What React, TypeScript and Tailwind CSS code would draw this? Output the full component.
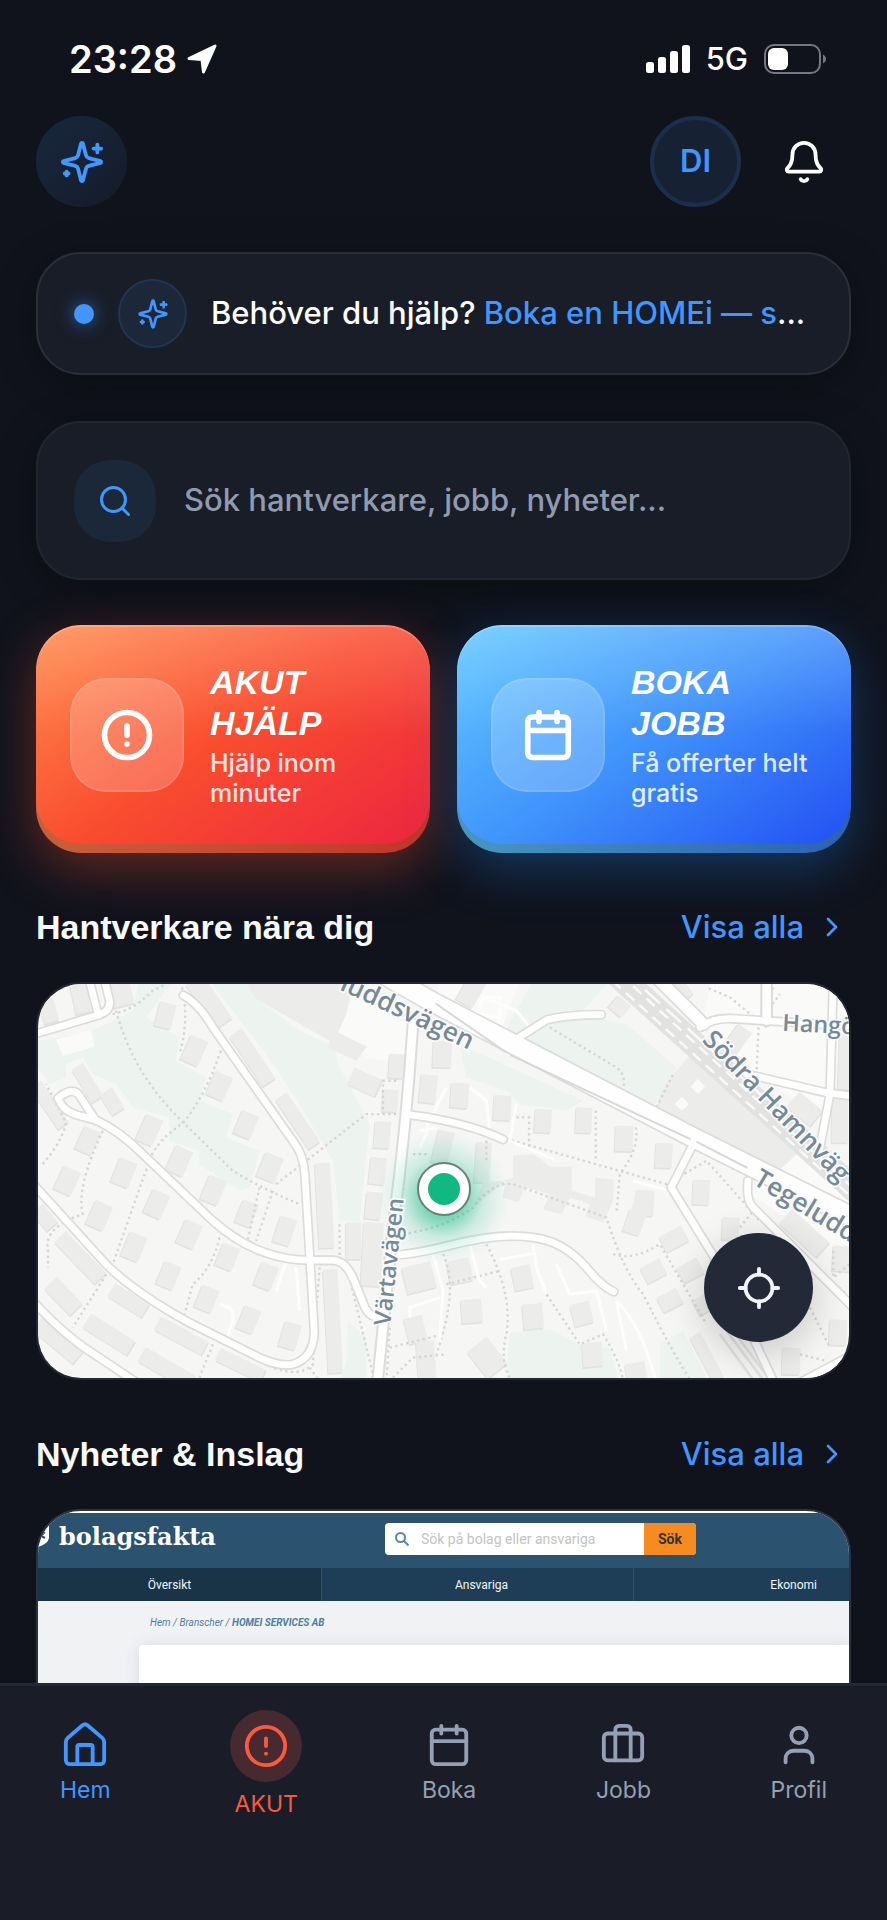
import type { ReactNode } from 'react';
import { Bell, Calendar, ChevronRight, CircleAlert, Search, User } from 'lucide-react';

function Sparkles({ size }: { size: number }) {
  return (
    <svg width={size} height={size} viewBox="0 0 24 24" fill="none" stroke="currentColor" strokeWidth="2" strokeLinecap="round" strokeLinejoin="round">
      <path d="M9.937 15.500A2 2 0 0 0 8.500 14.063l-6.135-1.582a.5.5 0 0 1 0-.962L8.500 9.936A2 2 0 0 0 9.937 8.500l1.582-6.135a.5.5 0 0 1 .963 0L14.063 8.500A2 2 0 0 0 15.500 9.937l6.135 1.581a.5.5 0 0 1 0 .964L15.500 14.063a2 2 0 0 0-1.437 1.437l-1.582 6.135a.5.5 0 0 1-.963 0z" />
      <path d="M20 3v4M22 5h-4M4 17v2M5 18H3" />
    </svg>
  );
}

function House() {
  return (
    <svg width="46" height="46" viewBox="0 0 24 24" fill="none" stroke="currentColor" strokeWidth="2" strokeLinecap="round" strokeLinejoin="round">
      <path d="M16 22v-9a1 1 0 0 0-1-1H9a1 1 0 0 0-1 1v9" />
      <path d="M2 10.500a3 3 0 0 1 1-2.200l7.700-6.600a2 2 0 0 1 2.600 0L21 8.300a3 3 0 0 1 1 2.200V20a2 2 0 0 1-2 2H4a2 2 0 0 1-2-2z" />
    </svg>
  );
}

function Luggage() {
  return (
    <svg width="46" height="46" viewBox="0 0 24 24" fill="none" stroke="currentColor" strokeWidth="2" strokeLinecap="round" strokeLinejoin="round">
      <path d="M16 20V4a2 2 0 0 0-2-2h-4a2 2 0 0 0-2 2v16" />
      <rect width="20" height="14" x="2" y="6" rx="2" />
    </svg>
  );
}

function StatusBar() {
  return (
    <div className="flex items-center justify-between pl-[69px] pr-[60px] pt-[39px] text-white">
      <div className="flex items-center gap-[10px]">
        <span className="text-[38px] font-semibold leading-10">23:28</span>
        <svg width="30" height="30" viewBox="0 0 30 30" fill="currentColor" stroke="currentColor" strokeWidth="3" strokeLinejoin="round">
          <path d="M2 14.500 28 2 16.500 28 15 15.500z" />
        </svg>
      </div>
      <div className="flex items-center gap-4">
        <svg width="44" height="28" viewBox="0 0 44 28" fill="currentColor">
          <rect x="0" y="17" width="8" height="11" rx="2.500" />
          <rect x="12" y="12" width="8" height="16" rx="2.500" />
          <rect x="24" y="6" width="8" height="22" rx="2.500" />
          <rect x="36" y="0" width="8" height="28" rx="2.500" />
        </svg>
        <span className="text-[31px] font-medium leading-10">5G</span>
        <svg width="63" height="30" viewBox="0 0 63 30">
          <rect x="1" y="1" width="55" height="28" rx="9" fill="none" stroke="#77777f" strokeWidth="2" />
          <rect x="4" y="4" width="20" height="22" rx="6" fill="#fff" />
          <path d="M59 10.500c4 2 4 7 0 9z" fill="#77777f" />
        </svg>
      </div>
    </div>
  );
}

type ActionProps = {
  lines: [string, string];
  sub: string;
  face: string;
  lip: string;
  children: ReactNode;
};

function ActionCard({ lines, sub, face, lip, children }: ActionProps) {
  return (
    <button className={`overflow-hidden rounded-[45px] pb-[9px] text-left text-white ${lip}`}>
      <span className={`flex h-[219px] items-center gap-[26px] rounded-[45px] pl-[34px] shadow-[inset_0_2px_0_rgba(255,255,255,0.2)] ${face}`}>
        <span className="flex size-[114px] shrink-0 items-center justify-center rounded-[36px] border-2 border-white/10 bg-white/20">
          {children}
        </span>
        <span className="flex flex-col">
          <span className="font-['Liberation_Sans'] text-[34px] font-bold italic leading-[41px]">
            {lines[0]}
            <br />
            {lines[1]}
          </span>
          <span className="mt-1 max-w-[200px] text-[25px] font-medium leading-[30px] text-white/85">{sub}</span>
        </span>
      </span>
    </button>
  );
}

function SectionHead({ title }: { title: string }) {
  return (
    <div className="flex items-center justify-between pr-[3px]">
      <h2 className="font-['Liberation_Sans'] text-[34px] font-bold leading-12 text-[#f8fafc]">{title}</h2>
      <a href="#" className="flex items-center gap-3 text-[31px] font-medium leading-12 text-[#4196ff]">
        Visa alla
        <ChevronRight size={32} strokeWidth={2} />
      </a>
    </div>
  );
}

// x, y, width, height, rotation
const houses: number[][] = [
  [498, 164, 50, 74, 14], [585, 270, 56, 80, 24], [660, 376, 56, 76, 24], [740, 492, 54, 74, 22],
  [450, 508, 54, 84, 24], [540, 600, 56, 80, 24], [642, 688, 56, 78, 22], [812, 620, 58, 78, 22],
  [266, 540, 54, 74, 24], [374, 636, 56, 78, 22], [472, 730, 56, 76, 24], [204, 660, 56, 76, 24],
  [300, 764, 56, 78, 24], [404, 858, 56, 78, 22], [570, 820, 56, 76, 24], [684, 888, 54, 72, 22],
  [508, 944, 54, 74, 22], [622, 1014, 54, 72, 22], [800, 946, 54, 74, 22], [748, 1076, 52, 74, 22],
  [872, 1124, 52, 78, 16], [856, 810, 52, 82, 18], [742, 758, 50, 72, 22], [148, 150, 46, 70, -16],
  [244, 112, 48, 90, -12], [366, 96, 62, 78, -14], [264, 366, 40, 116, -32], [338, 422, 44, 72, -32],
  [628, 122, 60, 160, -34], [758, 290, 46, 180, -34], [894, 480, 42, 178, -34], [975, 734, 46, 254, -3],
  [1000, 1080, 44, 310, -3], [150, 432, 40, 150, -34], [242, 890, 48, 174, -44], [192, 1006, 52, 110, -44],
  [386, 1018, 46, 120, -58], [328, 1120, 50, 156, -58], [544, 1124, 46, 160, -62], [176, 1136, 56, 160, -50],
  [500, 1222, 50, 170, -60], [722, 1212, 42, 150, -64], [136, 770, 44, 70, -40], [1148, 522, 48, 80, 4],
  [1134, 630, 48, 80, 6], [1122, 734, 48, 80, 6], [1172, 420, 46, 66, 4], [1190, 316, 44, 72, 4],
  [1062, 840, 46, 110, 0], [1118, 880, 60, 190, 3], [1094, 364, 56, 90, -66], [1286, 384, 50, 84, 6],
  [1328, 280, 56, 80, 2], [1258, 950, 90, 80, -14], [1248, 1106, 56, 78, -14], [1280, 1200, 54, 120, -4],
  [1380, 404, 54, 74, 4], [1508, 441, 52, 74, 3], [1630, 480, 50, 70, 3], [1752, 478, 48, 76, 3],
  [1873, 533, 54, 76, 2], [1992, 584, 50, 74, 3], [2104, 694, 50, 74, 3], [2192, 803, 50, 68, 3],
  [1860, 138, 50, 46, 40], [1935, 726, 54, 76, 4], [1904, 784, 50, 70, 18], [2022, 834, 76, 52, -28],
  [1961, 930, 66, 52, -28], [2072, 928, 68, 52, -28], [2010, 1018, 66, 50, -28], [2110, 1030, 50, 50, -28],
  [1380, 930, 70, 70, -12], [1416, 1050, 62, 70, -5], [1568, 950, 58, 70, -12], [1600, 1066, 60, 74, -5],
  [1746, 1058, 58, 66, -14], [1778, 1180, 60, 72, -5], [1910, 1240, 60, 70, -10], [1462, 1190, 76, 100, -38],
  [2120, 1188, 36, 150, -28], [2374, 1200, 54, 80, 2], [2514, 1114, 52, 76, 2], [2526, 893, 56, 76, 3],
  [2412, 816, 60, 150, -48], [1330, 560, 50, 100, 14], [1450, 605, 46, 120, 4], [1416, 90, 56, 90, 30],
  [2210, 240, 50, 90, 36], [2414, 444, 60, 90, -50], [2520, 480, 50, 130, 0], [2536, 300, 40, 170, 2],
  [2042, 90, 50, 60, -38],
];

const roads = [
  'M100 222L300 162Q336 150 330 118L316 60M270 60L296 160',
  'M552 104Q600 130 640 200L880 540Q912 580 916 640L944 1110Q944 1190 880 1210Q840 1218 780 1190L560 1080Q400 990 320 910L100 668',
  'M290 480L240 404Q220 376 176 412Q190 450 230 462L290 478Q360 510 430 580L640 780Q720 850 800 876Q860 898 930 898H1000Q1040 900 1064 960L1096 1040Q1110 1070 1150 1072',
  'M100 1020Q200 1130 300 1190L420 1270',
  'M1200 882Q1260 876 1340 856Q1500 814 1600 830Q1690 840 1760 920Q1810 980 1842 992',
  'M1230 462Q1400 484 1510 536M1530 248L1640 178Q1700 162 1804 162',
  'M2080 550L2014 680L2150 900L2330 1280',
  'M2244 660Q2238 720 2260 740L2560 1040',
  'M2100 200Q2140 170 2200 174L2550 196M2500 60L2490 400L2460 560M2240 340L2480 396L2560 406',
  'M2390 1270L2560 1180',
];

const paths = [
  'M350 150Q400 340 552 486L700 630Q800 690 900 730M340 160Q400 150 460 90L500 70M548 80Q570 180 540 280M664 270Q620 400 552 486Q470 540 450 600L340 910L220 1100',
  'M310 510Q230 680 250 760Q130 800 146 870V920M130 610Q190 540 200 486L140 370M660 830Q640 920 580 970L550 1080M830 670L1100 460H1190',
  'M780 680L740 860M820 690L770 840M960 910H1040L1120 1240M1020 790V900M930 1220L960 1260M640 1150L600 1250',
  'M1190 360H1150V460M1250 190L1210 700M1240 580H1290M1210 820Q1340 800 1420 740Q1480 660 1540 670L1820 770Q1870 930 1930 1000Q2020 1180 2080 1270',
  'M1520 534L2000 670L2120 600L2280 780M1650 200L1850 320Q1880 340 1870 390M1788 450V600M1908 500Q1920 560 1860 640L1850 760',
  'M1550 470H1588V560M1840 880Q1900 900 1980 850L2120 1090M1460 850Q1540 1000 1520 1120Q1500 1200 1530 1250M1330 880Q1380 980 1310 1180M1340 970L1500 930M1640 1000Q1720 1120 1740 1150L1810 1120Q1860 1200 1870 1260',
  'M110 690L330 930L560 1094L820 1220Q900 1250 940 1210L960 920M1170 1100L1160 1270M1170 1160L1330 1120M1180 1250L1240 1190L1340 1180M1970 440L2020 340M2320 80L2280 180L2340 100M2276 200L2270 330',
  'M2500 870V950L2560 900M2400 1180L2480 1200M2220 800L2260 750L2540 1000M2430 1040L2490 1160M2300 200L2190 110L2120 80M1460 540V600',
];

function StreetMap() {
  return (
    <svg className="absolute inset-0 h-full w-full" viewBox="116 67 2431 1187" preserveAspectRatio="xMidYMid slice" role="img" aria-label="Karta">
      <defs>
        <radialGradient id="glow">
          <stop offset="0.300" stopColor="#10b981" stopOpacity="0.550" />
          <stop offset="0.600" stopColor="#10b981" stopOpacity="0.180" />
          <stop offset="0.850" stopColor="#10b981" stopOpacity="0.050" />
          <stop offset="1" stopColor="#10b981" stopOpacity="0" />
        </radialGradient>
      </defs>
      <rect x="100" y="50" width="2500" height="1240" fill="#f6f6f5" />
      <g fill="#edf3ef">
        <path d="M420 60H520L440 170L540 230L530 300L620 350L600 420L700 460L680 530L780 570L750 680L720 690L600 610V570L510 540V470L400 440L350 370L280 340L250 290L200 310V350L150 370L100 300V240L180 230L280 210L340 180L400 150Z" />
        <path d="M630 60H740L780 120L900 210L1010 260V300L1110 490L1080 780H1020L1000 600L900 430L800 280Z" />
        <path d="M1600 60H1830L1740 160L1880 190L2030 320L1960 440L1870 400L1530 240L1510 220Z" />
        <path d="M1380 250L1750 420L1700 450L1560 430L1520 390L1400 350Z" />
        <path d="M1530 1115L1650 1105L1760 1160H1830L1860 1270H1520Z" />
        <path d="M1980 1150L2050 1110L2130 1270H1980ZM1045 1080L1100 1130V1270H1020L1040 1200Z" />
      </g>
      <g fill="#fafaf8">
        <path d="M1060 110L1240 200L1210 310L1100 290L1010 210Z" />
        <path d="M2130 60H2560V540L2300 360L2110 200ZM1320 60L1560 60L1500 220L1300 130Z" />
        <path d="M170 236L276 208L286 258L190 286ZM2400 560L2560 700V900L2250 700Z" />
      </g>
      <g fill="#ececeb">
        {houses.map(([x, y, w, h, r], i) => (
          <g key={i} transform={`rotate(${r} ${x} ${y})`}>
            <rect x={x - w / 2 - 3} y={y - h / 2 + 5} width={w} height={h} fill="#e2e2e1" />
            <rect x={x - w / 2} y={y - h / 2} width={w} height={h} />
          </g>
        ))}
        <path d="M740 67H1060L1040 160L1016 215L1102 258L1070 300L985 260L990 240L770 115Z" />
        <path d="M1450 664L1510 660L1540 650V584L1600 580L1630 600L1650 618H1716V690L1786 710V650L1842 656L1840 720L1810 784L1755 766L1770 730L1710 710L1686 760L1630 746L1650 700L1576 680L1556 724L1508 710L1520 660L1420 740Z" />
        <path d="M1910 690L1964 692L1960 760L1940 762L1920 820L1870 806L1895 744Z" />
        <path d="M2070 285L2390 580L2330 636L1970 440Q1980 390 2020 340Z" />
      </g>
      <path d="M2094 354L2116 378L2094 400L2072 378ZM2046 408L2068 430L2046 450L2024 430Z" fill="#fafaf8" />
      <g fill="none" stroke="#d5d5d4" strokeWidth="7" strokeDasharray="7 10">
        {paths.map((d) => (
          <path key={d} d={d} />
        ))}
      </g>
      <g fill="none" stroke="#fdfdfd" strokeWidth="9">
        <path d="M660 1030Q710 1040 700 1080L680 1140M860 900L830 990M890 920L900 1050M1290 460L1280 520L1260 560M1340 380L1300 460M1410 380L1460 420L1470 510M1550 430L1530 540L1664 596M1410 850L1440 960L1460 980M1300 880L1330 990L1320 1140M1230 1070V1040L1320 1010M1600 850L1610 920L1640 1000M1500 896L1610 876M1670 910L1710 1000L1790 990L1820 1110M1850 1020Q1930 1100 1970 1270M1850 1020L1880 1170M1900 660L2010 690M1310 500L1260 510" />
        <path d="M1450 110L1550 150L1600 210M1430 160L1500 170L1500 110L1450 110Z" />
      </g>
      {/* rail yard */}
      <g fill="none">
        <path d="M1850 40L2590 710" stroke="#e2e2e1" strokeWidth="76" />
        <path d="M1872 30L2612 700" stroke="#fafafa" strokeWidth="7" strokeDasharray="60 26" />
        <path d="M1860 40L2596 716M1838 60L2580 732" stroke="#fafafa" strokeWidth="7" strokeDasharray="34 20" />
        <path d="M2160 1120L2270 1270M2180 1110L2300 1270M2200 1110L2320 1270" stroke="#e2e2e1" strokeWidth="8" />
      </g>
      <g fill="none" strokeLinecap="round" strokeLinejoin="round">
        {roads.map((d) => (
          <path key={d} d={d} stroke="#dcdcdb" strokeWidth="30" />
        ))}
        <path d="M1240 190Q1220 500 1180 800L1132 1280M2300 40V180" stroke="#dcdcdb" strokeWidth="38" />
        <path d="M1960 40L2110 190" stroke="#dcdcdb" strokeWidth="44" />
        <path d="M1150 40L1310 130L2080 530L2560 770" stroke="#dcdcdb" strokeWidth="66" />
        {roads.map((d) => (
          <path key={d} d={d} stroke="#fefefe" strokeWidth="20" />
        ))}
        <path d="M1240 190Q1220 500 1180 800L1132 1280M2300 40V180" stroke="#fefefe" strokeWidth="26" />
        <path d="M1960 40L2110 190" stroke="#fefefe" strokeWidth="34" />
        <path d="M1150 40L1310 130L2080 530L2560 770" stroke="#fefefe" strokeWidth="56" />
        <path d="M1310 130L1518 274M1534 284L2070 534M2092 544L2240 620" stroke="#d8d8d7" strokeWidth="6" />
      </g>
      <circle cx="1331" cy="710" r="200" fill="url(#glow)" />
      <g fill="#758a98" stroke="#fafafa" strokeWidth="10" paintOrder="stroke" fontFamily="Open Sans, Noto Sans, sans-serif" fontWeight="600" fontSize="78">
        <text transform="translate(1408 268) rotate(25)" textAnchor="end">luddsvägen</text>
        <text transform="translate(1172 1096) rotate(-84)" fontSize="70">Värtavägen</text>
        <text transform="translate(2104 240) rotate(46)">Södra Hamnväg</text>
        <text transform="translate(2256 668) rotate(31)">Tegeludd</text>
        <text transform="translate(2346 210) rotate(3)" fontSize="70">Hangö</text>
      </g>
    </svg>
  );
}

function NewsThumb() {
  return (
    <div className="h-[400px] bg-[#f1f2f4] font-['Roboto'] text-[12px]">
      <div className="flex h-[57px] items-start border-t-2 border-white bg-[#2b526e] pt-[10px]">
        <svg width="11" height="24" viewBox="0 0 11 24">
          <path d="M0 5L11 0V15Q10 21 0 24Z" fill="#fff" />
          <path d="M3 8l3 2-3 3 4 2" fill="none" stroke="#2b526e" strokeWidth="2" />
        </svg>
        <span className="ml-[10px] w-[326px] font-['DejaVu_Serif'] text-[24px] font-bold leading-7 text-white">bolagsfakta</span>
        <div className="flex h-8 w-[311px] items-center overflow-hidden rounded bg-white">
          <svg className="ml-[10px] shrink-0" width="14" height="14" viewBox="0 0 14 14" fill="none" stroke="#5c86a3" strokeWidth="2">
            <circle cx="5.500" cy="5.500" r="4.500" />
            <path d="m9 9 4.500 4.500" />
          </svg>
          <input aria-label="Sök på bolag" placeholder="Sök på bolag eller ansvariga" className="ml-3 min-w-0 flex-1 text-[14px] placeholder:text-[#c3c3c3]" />
          <button className="h-full w-[52px] bg-[#f68b1f] text-[14px] font-bold text-[#333]">Sök</button>
        </div>
      </div>
      <div className="flex h-[33px] bg-[#1e3d56] text-[#f1f5f8]">
        <span className="flex w-[284px] shrink-0 items-center justify-center border-r border-[#2b526e] bg-[#1a3447] pr-5">Översikt</span>
        <span className="flex w-[312px] shrink-0 items-center justify-center border-r border-[#2b526e] pl-2">Ansvariga</span>
        <span className="flex flex-1 items-center justify-end pr-8">Ekonomi</span>
      </div>
      <div className="pl-[112px] pt-[14px] text-[10px] italic leading-4 text-[#4c7f9e]">
        Hem / Branscher / <b>HOMEI SERVICES AB</b>
      </div>
      <div className="ml-[101px] mt-[14px] h-[300px] rounded-tl bg-white shadow-[0_0_16px_rgba(60,70,120,0.12)]" />
    </div>
  );
}

function NavItem({ label, color, children }: { label: string; color: string; children: ReactNode }) {
  return (
    <a href="#" className={`flex flex-col items-center text-[23px] leading-7 ${color}`}>
      {children}
      {label}
    </a>
  );
}

export default function App() {
  return (
    <div className="flex h-screen w-full flex-col overflow-hidden bg-[#10131c] font-['Inter',sans-serif]">
      <StatusBar />

      <main className="flex min-h-0 flex-1 flex-col overflow-hidden px-9 pt-[37px]">
        <header className="flex items-center justify-between">
          <button aria-label="Assistent" className="flex size-[91px] items-center justify-center rounded-full bg-linear-to-br from-[#18283f] to-[#141b28] text-[#4196ff]">
            <Sparkles size={46} />
          </button>
          <div className="flex items-center gap-10 pr-6">
            <button className="size-[91px] rounded-full border-4 border-[#1b2f4c] bg-[#162133] text-[31px] font-semibold text-[#4196ff]">DI</button>
            <button aria-label="Notiser" className="text-white">
              <Bell size={46} strokeWidth={2} />
            </button>
          </div>
        </header>

        <button className="mt-[45px] flex h-[123px] shrink-0 items-center rounded-[45px] border-2 border-[#2b2e39] bg-[#191d27] pl-9 pr-8 text-left shadow-[0_8px_40px_rgba(0,0,0,0.3)]">
          <span className="size-5 shrink-0 rounded-full bg-[#4196ff] shadow-[0_0_18px_rgba(65,150,255,0.6)]" />
          <span className="ml-6 flex size-[69px] shrink-0 items-center justify-center rounded-full border-2 border-[#1f3552] bg-[#1c283a] text-[#4196ff]">
            <Sparkles size={32} />
          </span>
          <span className="ml-6 min-w-0 flex-1 whitespace-nowrap text-[31px] font-medium text-white">
            Behöver du hjälp? <span className="text-[#4196ff]">Boka en HOMEi — s</span>...
          </span>
        </button>

        <label className="mt-[46px] flex h-[159px] shrink-0 items-center rounded-[45px] border-2 border-[#222631] bg-[#191d27] pl-9 pr-11 shadow-[0_8px_40px_rgba(0,0,0,0.3)]">
          <span className="flex size-[82px] shrink-0 items-center justify-center rounded-[36px] bg-[#1b283a] text-[#4196ff]">
            <Search size={36} strokeWidth={2} />
          </span>
          <input aria-label="Sök" placeholder="Sök hantverkare, jobb, nyheter..." className="ml-7 min-w-0 flex-1 text-[31px] font-medium placeholder:text-[#8f9bb0]" />
        </label>

        <div className="mt-[45px] grid shrink-0 grid-cols-2 gap-[27px]">
          <ActionCard
            lines={['AKUT', 'HJÄLP']}
            sub="Hjälp inom minuter"
            lip="bg-linear-to-r from-[#c9603a] to-[#c03428] shadow-[0_16px_52px_rgba(255,80,45,0.35)]"
            face="bg-[linear-gradient(180deg,rgba(255,255,255,0.16),transparent_50%),linear-gradient(145deg,#ff8a4c_0%,#f94c2f_50%,#ec2540_100%)]"
          >
            <CircleAlert size={54} strokeWidth={2.5} />
          </ActionCard>
          <ActionCard
            lines={['BOKA', 'JOBB']}
            sub="Få offerter helt gratis"
            lip="bg-linear-to-r from-[#4896c0] to-[#2c61b4] shadow-[0_16px_52px_rgba(30,140,255,0.3)]"
            face="bg-[linear-gradient(180deg,rgba(255,255,255,0.16),transparent_50%),linear-gradient(145deg,#62c8ff_0%,#4093fb_50%,#2350f2_100%)]"
          >
            <Calendar size={54} strokeWidth={2.5} />
          </ActionCard>
        </div>

        <section className="mt-[50px] shrink-0">
          <SectionHead title="Hantverkare nära dig" />
          <div className="relative mt-[31px] h-[398px] overflow-hidden rounded-[45px] border-2 border-[#222732]">
            <StreetMap />
            <span className="absolute left-1/2 top-[52%] size-[54px] -translate-x-1/2 -translate-y-1/2 rounded-full border-2 border-[#6b7f78] bg-white p-[9px]">
              <span className="block size-8 rounded-full bg-[#10b981]" />
            </span>
            <button aria-label="Min position" className="absolute bottom-9 right-9 flex size-[109px] items-center justify-center rounded-full bg-[#232937] text-[#f1f5f9] shadow-[0_10px_40px_rgba(0,0,0,0.2)]">
              <svg width="46" height="46" viewBox="0 0 24 24" fill="none" stroke="currentColor" strokeWidth="2" strokeLinecap="round">
                <circle cx="12" cy="12" r="7" />
                <path d="M2 12h3M19 12h3M12 2v3M12 19v3" />
              </svg>
            </button>
          </div>
        </section>

        <section className="mt-[50px] shrink-0">
          <SectionHead title="Nyheter & Inslag" />
          <div className="mt-[31px] overflow-hidden rounded-[45px] border-2 border-[#2d323d]">
            <NewsThumb />
          </div>
        </section>
      </main>

      <nav className="flex h-[237px] shrink-0 items-start justify-between border-t-3 border-[#222936] bg-[#1a1d27] px-[60px] pt-6">
        <NavItem label="Hem" color="text-[#4196ff] pt-3 gap-2">
          <House />
        </NavItem>
        <NavItem label="AKUT" color="text-[#fa5a40] gap-2">
          <span className="flex size-[72px] items-center justify-center rounded-full bg-[#472a2f]">
            <CircleAlert size={46} strokeWidth={2} />
          </span>
        </NavItem>
        <NavItem label="Boka" color="text-[#94a0b4] pt-3 gap-2">
          <Calendar size={46} strokeWidth={2} />
        </NavItem>
        <NavItem label="Jobb" color="text-[#94a0b4] pt-3 gap-2">
          <Luggage />
        </NavItem>
        <NavItem label="Profil" color="text-[#94a0b4] pt-3 gap-2">
          <User size={46} strokeWidth={2} />
        </NavItem>
      </nav>
    </div>
  );
}
